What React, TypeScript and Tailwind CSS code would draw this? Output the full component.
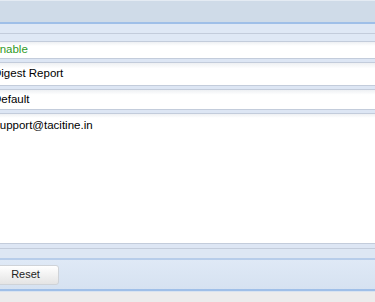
import React from 'react';

const Sep: React.FC = () => (
  <div className="border-y border-[#c3ccdb] bg-[#dde6f4] h-[5px]" />
);

const Row: React.FC<{ h: string; children: React.ReactNode; green?: boolean }> = ({ h, children, green }) => (
  <div
    className={`${h} flex items-center bg-gradient-to-b from-[#eef0f3] via-white via-[25%] to-white text-[11.5px] leading-none ${
      green ? 'text-[#2f9a1f]' : 'text-black'
    }`}
  >
    <span className="-ml-[7px] whitespace-nowrap">{children}</span>
  </div>
);

export default function App() {
  return (
    <div className="w-[375px] h-[302px] overflow-hidden bg-[#ececec] flex flex-col font-['Liberation_Sans',Arial,sans-serif]">
      {/* title bar */}
      <div className="h-[22px] border-t border-[#e4ebf3] bg-[#cfdbe8]" />
      <div className="h-[2px] bg-[#9fbfe8]" />
      <div className="h-[10px] bg-[#dfe8f5] border-b border-[#c3ccdb]" />
      <div className="h-[8px] bg-[#dfe8f5] border-b border-[#c3ccdb]" />

      <Row h="h-[16px]" green>
        <span className="-ml-[1px]">Enable</span>
      </Row>
      <Sep />
      <Row h="h-[22px]">Digest Report</Row>
      <Sep />
      <Row h="h-[19px]">Default</Row>
      <Sep />

      {/* message body */}
      <div className="h-[129px] bg-gradient-to-b from-[#eef0f3] via-white via-[3%] to-white text-[11.5px] text-black pt-[3px]">
        <span className="-ml-[6px] block whitespace-nowrap">support@tacitine.in</span>
      </div>

      {/* footer */}
      <div className="h-[6px] border-y border-[#c3ccdb] bg-[#dde6f4]" />
      <div className="h-[11px] bg-[#dde7f4] border-b-2 border-[#b7cdea]" />
      <div className="h-[29px] bg-gradient-to-b from-[#dfe9f6] to-[#d6e2f1] flex items-center">
        <button className="-ml-[8px] w-[67px] h-[20px] shrink-0 rounded-[3px] border border-[#cfd3d8] bg-gradient-to-b from-white to-[#e4e4e4] text-[11px] text-[#222] flex items-center justify-center">
          Reset
        </button>
      </div>
      <div className="h-[2px] bg-[#9fbfe8]" />
      <div className="h-px bg-[#d8e3f0]" />
      <div className="flex-1 bg-[#ececec]" />
    </div>
  );
}
